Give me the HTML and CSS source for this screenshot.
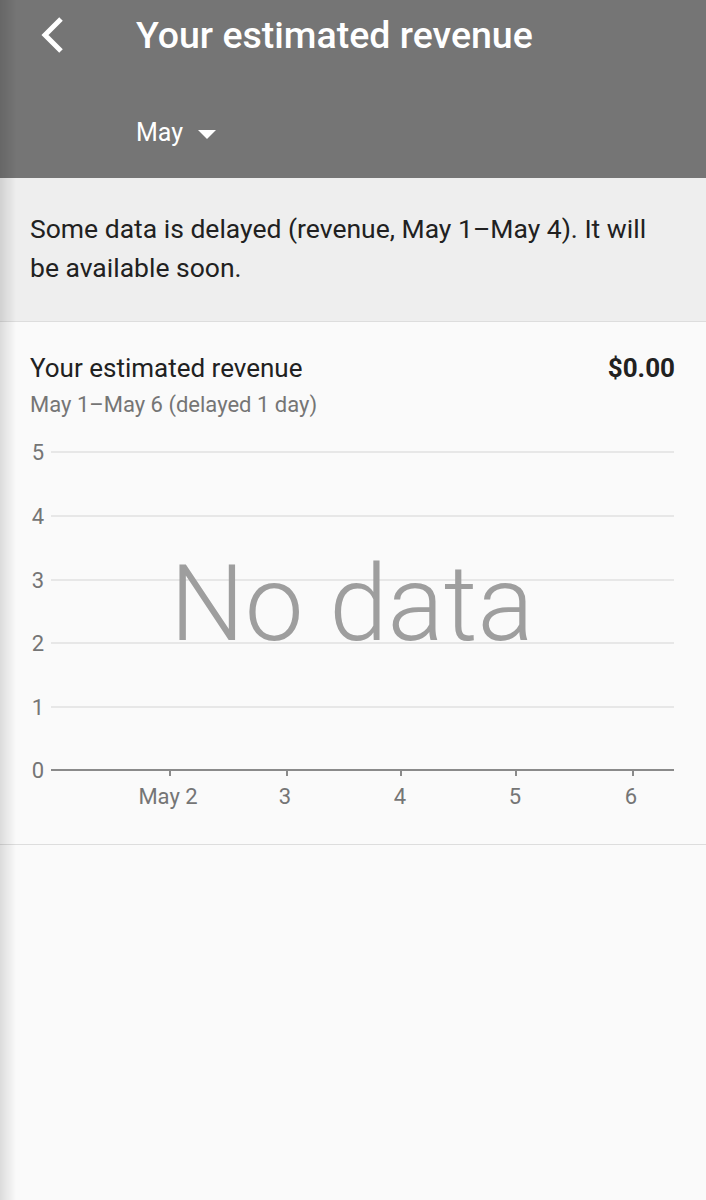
FILE: index.html
```html
<!DOCTYPE html>
<html lang="en">
  <head>
    <meta charset="UTF-8" />
    <meta name="viewport" content="width=device-width, initial-scale=1.0" />
    <title>Your estimated revenue</title>
    <link rel="stylesheet" href="styles.css">
  </head>
  <body>
    <!-- App bar -->
    <header class="appbar">
      <div class="appbar-top">
        <svg class="back" width="28" height="40" viewBox="0 0 28 40">
          <path d="M22 4 L6 20 L22 36" fill="none" stroke="#fff" stroke-width="5" />
        </svg>
        <h1>Your estimated revenue</h1>
      </div>
      <div class="period">May <span class="caret"></span></div>
    </header>

    <!-- Delayed data notice -->
    <div class="notice">
      Some data is delayed (revenue, May 1–May 4). It will be available soon.
    </div>

    <!-- Revenue card -->
    <section class="card">
      <div class="card-head">
        <div>
          <div class="card-title">Your estimated revenue</div>
          <div class="card-sub">May 1–May 6 (delayed 1 day)</div>
        </div>
        <div class="total">$0.00</div>
      </div>

      <svg class="chart" width="706" height="425" viewBox="0 0 706 425">
        <g class="grid">
          <line x1="51" y1="33" x2="674" y2="33" />
          <line x1="51" y1="97" x2="674" y2="97" />
          <line x1="51" y1="161" x2="674" y2="161" />
          <line x1="51" y1="224" x2="674" y2="224" />
          <line x1="51" y1="288" x2="674" y2="288" />
        </g>
        <g class="axis">
          <line x1="51" y1="351" x2="674" y2="351" />
          <line x1="170" y1="351" x2="170" y2="357" />
          <line x1="287" y1="351" x2="287" y2="357" />
          <line x1="401" y1="351" x2="401" y2="357" />
          <line x1="516" y1="351" x2="516" y2="357" />
          <line x1="633" y1="351" x2="633" y2="357" />
        </g>
        <g class="y-labels">
          <text x="38" y="41">5</text>
          <text x="38" y="105">4</text>
          <text x="38" y="169">3</text>
          <text x="38" y="232">2</text>
          <text x="38" y="296">1</text>
          <text x="38" y="359">0</text>
        </g>
        <g class="x-labels">
          <text x="168" y="385">May 2</text>
          <text x="285" y="385">3</text>
          <text x="400" y="385">4</text>
          <text x="515" y="385">5</text>
          <text x="631" y="385">6</text>
        </g>
        <text class="no-data" x="352" y="221">No data</text>
      </svg>
    </section>

    <div class="edge-shadow"></div>
  </body>
</html>
```

FILE: styles.css
```css
/* General Styles */
body {
  font-family: "Roboto", "Noto Sans", sans-serif;
  margin: 0;
  padding: 0;
  background-color: #fafafa;
  color: #212121;
  min-height: 1200px;
}

/* App bar */
.appbar {
  background-color: #757575;
  color: white;
  height: 178px;
  box-sizing: border-box;
}

.appbar-top {
  display: flex;
  align-items: center;
  height: 70px;
}

.appbar .back {
  margin-left: 39px;
  margin-right: 69px;
}

.appbar h1 {
  margin: 0;
  font-size: 37.5px;
  font-weight: 500;
  line-height: 40px;
}

.period {
  display: flex;
  align-items: center;
  margin-top: 47px;
  padding-left: 136px;
  font-size: 25px;
  line-height: 32px;
}

.period .caret {
  width: 0;
  height: 0;
  margin-left: 15px;
  margin-top: 2px;
  border-left: 9px solid transparent;
  border-right: 9px solid transparent;
  border-top: 9px solid white;
}

/* Notice */
.notice {
  background-color: #eeeeee;
  border-bottom: 1px solid #dddddd;
  padding: 31px 40px 34px 30px;
  font-size: 26.5px;
  line-height: 39px;
}

/* Card */
.card {
  background-color: #fafafa;
  border-bottom: 1px solid #dddddd;
  padding-top: 30px;
}

.card-head {
  display: flex;
  justify-content: space-between;
  align-items: flex-start;
  padding: 0 31px 0 30px;
}

.card-title {
  font-size: 26px;
  line-height: 32px;
}

.card-sub {
  margin-top: 7px;
  font-size: 22px;
  line-height: 28px;
  color: #757575;
}

.total {
  font-size: 26px;
  font-weight: bold;
  line-height: 32px;
}

.chart {
  display: block;
}

.chart .grid line {
  stroke: #e0e0e0;
  stroke-width: 1.5;
}

.chart .axis line {
  stroke: #8a8a8a;
  stroke-width: 2;
}

.chart text {
  font-family: "Roboto", sans-serif;
  font-size: 22px;
  fill: #757575;
  text-anchor: middle;
}

.chart .no-data {
  font-size: 105px;
  font-weight: 300;
  fill: #9e9e9e;
}

/* Shadow along the left edge */
.edge-shadow {
  position: fixed;
  top: 0;
  left: 0;
  width: 16px;
  height: 100%;
  pointer-events: none;
  background: linear-gradient(to right, rgba(0, 0, 0, 0.12), rgba(0, 0, 0, 0));
}
```
